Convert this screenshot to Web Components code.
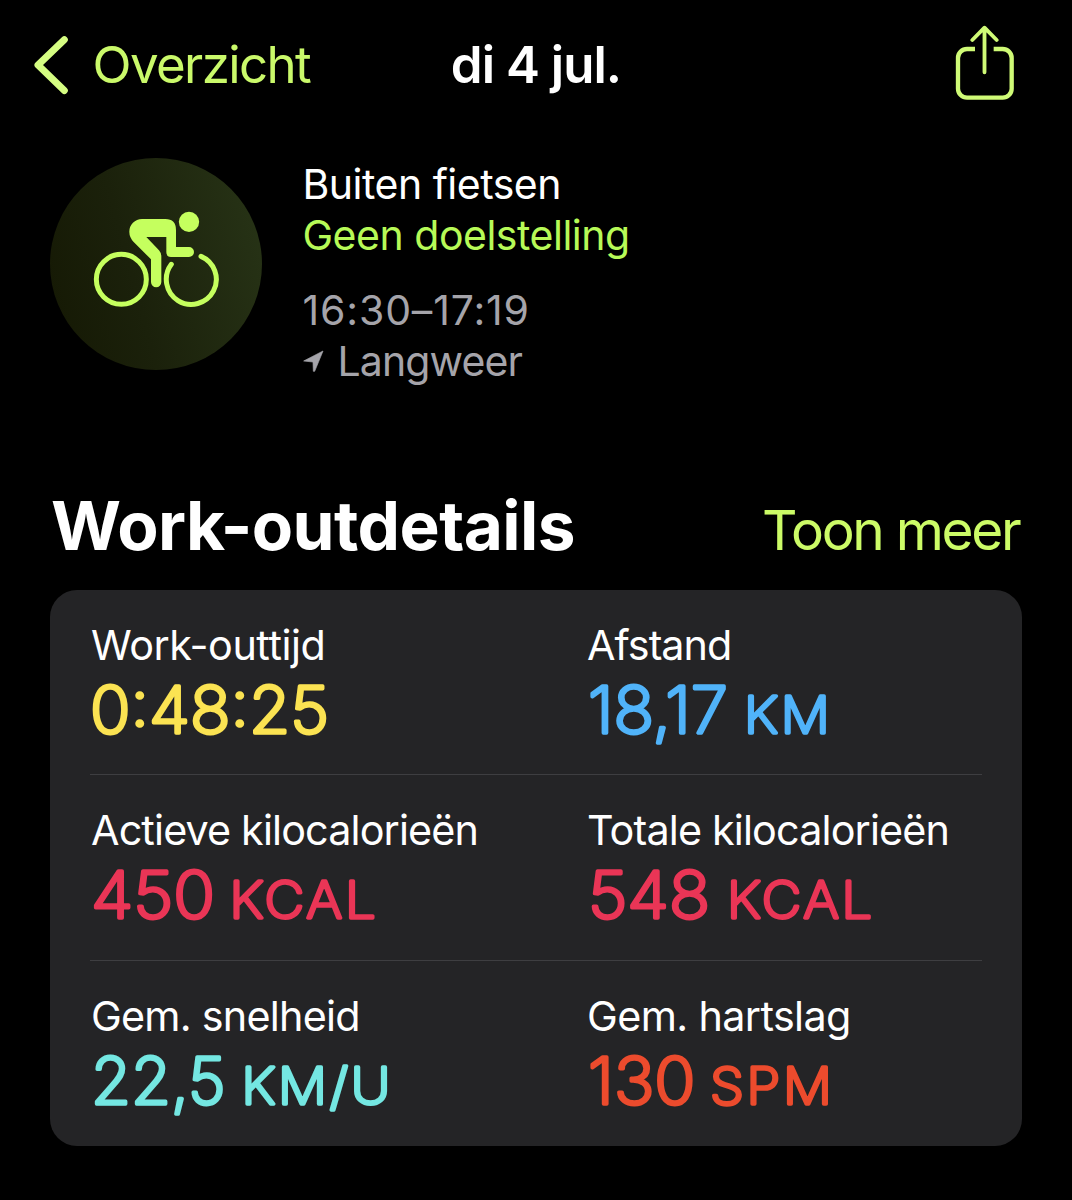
<!DOCTYPE html>
<html lang="nl">
<head>
<meta charset="utf-8">
<title>Work-out</title>
<style>
  html, body { margin: 0; background: #000; }
  body { width: 1072px; height: 1200px; overflow: hidden; font-family: Inter, "Liberation Sans", sans-serif; color: #fff; }
</style>
</head>
<body>
<workout-screen></workout-screen>
<script>
const define = (name, html) => {
  const template = document.createElement('template');
  template.innerHTML = html;
  customElements.define(name, class extends HTMLElement {
    constructor() {
      super();
      this.attachShadow({ mode: 'open' }).append(template.content.cloneNode(true));
    }
  });
};

/* Top bar: back link, date, share button */
define('nav-bar', `
<style>
  :host { display: grid; grid-template-columns: 1fr auto 1fr; align-items: center; height: 130px; padding: 0 33px; box-sizing: border-box; font-size: 51px; line-height: 60px; }
  .back { display: flex; align-items: center; gap: 23.500px; color: #caf96a; letter-spacing: -1.6px; }
  .title { font-weight: 600; letter-spacing: -.97px; white-space: nowrap; }
  .share { justify-self: end; margin-right: 23px; }
  svg { display: block; }
</style>
<div class="back">
  <svg width="36" height="60" viewBox="33 35 36 60" fill="none" stroke="#d5fd82" stroke-width="7" stroke-linecap="round" stroke-linejoin="round"><path d="M64.3 39.7 38 65l26.3 25.500"/></svg>
  <span><slot name="back"></slot></span>
</div>
<div class="title"><slot></slot></div>
<svg class="share" width="62" height="80" viewBox="72 45 186 240" fill="none" stroke="#cffa76" stroke-width="13" stroke-linejoin="round"><path d="M135 117h-24a27 27 0 0 0-27 27v92a27 27 0 0 0 27 27h107a27 27 0 0 0 27-27v-92a27 27 0 0 0-27-27h-27"/><path stroke-width="11.500" stroke-linecap="round" d="M163.500 187V54M127 90l36.500-37 36.500 37"/></svg>
`);

define('cycle-badge', `
<style>
  :host { display: block; width: 212px; height: 212px; border-radius: 50%; background: linear-gradient(75deg, #161a05 8%, #1b210b 40%, #273316 95%); }
  svg { display: block; }
</style>
<svg width="212" height="212" viewBox="30 24 636 636" fill="#c5ff5e">
  <g fill="none" stroke="#c5ff5e" stroke-width="15" stroke-linecap="round">
    <circle cx="244" cy="388" r="75"/>
    <path d="M483 319A75 75 0 1 1 394 343"/>
  </g>
  <circle cx="447" cy="215.500" r="30.500"/>
  <path d="M306 207H376Q408 207 408 240V291H447a15 15 0 0 1 0 30H393Q379 321 379 307V261H319L357 301Q364 309 364 319V396a15.500 15.500 0 0 1-31 0V328L281 276Q268 262 268 246A38 38 0 0 1 306 207Z"/>
</svg>
`);

define('workout-summary', `
<style>
  :host { display: flex; gap: 40.500px; padding: 28px 50px 0; font-size: 41px; line-height: 51px; white-space: nowrap; }
  .info { padding-top: 1px; }
  .name { letter-spacing: -.5px; }
  .goal { color: #b7fa57; letter-spacing: -.48px; }
  .time { color: #a5a4aa; letter-spacing: .85px; margin-top: 24px; }
  .place { color: #a5a4aa; letter-spacing: -.9px; display: flex; align-items: center; gap: 14px; }
</style>
<cycle-badge></cycle-badge>
<div class="info">
  <div class="name"><slot name="name"></slot></div>
  <div class="goal"><slot name="goal"></slot></div>
  <div class="time"><slot name="time"></slot></div>
  <div class="place"><svg width="21" height="23" viewBox="41 604 63 69" fill="#a5a4aa" stroke="#a5a4aa" stroke-width="2" stroke-linejoin="round"><path d="M43 637 101 607 76 668 72 668 71 640Z"/></svg><slot name="place"></slot></div>
</div>
`);

define('section-heading', `
<style>
  :host { display: flex; justify-content: space-between; align-items: baseline; height: 80px; padding: 0 52px 0 51px; white-space: nowrap; }
  h2 { margin: 0; font-size: 67.500px; line-height: 80px; font-weight: 700; letter-spacing: -.55px; }
  .action { font-size: 55px; line-height: 80px; color: #ccfb67; letter-spacing: -2.300px; margin-right: .5px; }
</style>
<h2><slot></slot></h2><span class="action"><slot name="action"></slot></span>
`);

/* One statistic. Figures are outlined with a round-joined stroke for soft terminals. */
customElements.define('stat-cell', class extends HTMLElement {
  connectedCallback() {
    const a = n => this.getAttribute(n);
    const unit = a('unit') ? `<text class="unit" x="${a('ux')}" y="63" textLength="${a('ul')}" lengthAdjust="spacingAndGlyphs">${a('unit')}</text>` : '';
    this.attachShadow({ mode: 'open' }).innerHTML = `
<style>
  :host { display: block; padding-top: 30px; }
  .label { font-size: 41.300px; line-height: 50px; height: 50px; padding-left: 1px; white-space: nowrap; letter-spacing: ${a('track')}px; }
  svg { display: block; overflow: visible; fill: ${a('tint')}; stroke: ${a('tint')}; stroke-linejoin: round; }
  .value { font-size: 64.500px; font-weight: 200; stroke-width: 3.500px; }
  .unit { font-size: 50.500px; font-weight: 200; stroke-width: 3.400px; letter-spacing: 2.500px; }
</style>
<div class="label"><slot></slot></div>
<svg width="396" height="80"><text class="value" x="${a('vx')}" y="63.300" textLength="${a('vl')}" lengthAdjust="spacingAndGlyphs">${a('value')}</text>${unit}</svg>`;
  }
});

define('stat-row', `
<style>
  :host { display: grid; grid-template-columns: 496px 396px; height: 185.300px; box-sizing: border-box; border-bottom: 1px solid #3e3e41; }
  :host(:last-of-type) { border-bottom-color: transparent; }
</style>
<slot></slot>
`);

define('stat-card', `
<style>
  :host { display: block; margin: 24px 50px 0; height: 556px; padding: 0 40px; box-sizing: border-box; background: #242426; border-radius: 27px; }
</style>
<slot></slot>
`);

define('workout-screen', `
<style>
  :host { display: block; height: 1200px; background: #000; }
  section-heading { margin-top: 116px; }
  workout-summary { height: 212px; }
</style>
<nav-bar><span slot="back">Overzicht</span>di 4 jul.</nav-bar>
<workout-summary>
  <span slot="name">Buiten fietsen</span><span slot="goal">Geen doelstelling</span>
  <span slot="time">16:30–17:19</span><span slot="place">Langweer</span>
</workout-summary>
<section-heading>Work-outdetails<span slot="action">Toon meer</span></section-heading>
<stat-card>
  <stat-row>
    <stat-cell track="-.45" tint="#fbe352" value="0:48:25" vx="0" vl="239">Work-outtijd</stat-cell>
    <stat-cell track="-1" tint="#50b3f9" value="18,17" vx="2" vl="140" unit="KM" ux="158" ul="88.500">Afstand</stat-cell>
  </stat-row>
  <stat-row>
    <stat-cell track="-.86" tint="#ea3556" value="450" vx="1" vl="124" unit="KCAL" ux="139.500" ul="149">Actieve kilocalorieën</stat-cell>
    <stat-cell track="-.84" tint="#ea3556" value="548" vx="2" vl="122" unit="KCAL" ux="141" ul="148">Totale kilocalorieën</stat-cell>
  </stat-row>
  <stat-row>
    <stat-cell track="-.76" tint="#74e7e2" value="22,5" vx="1" vl="134.500" unit="KM/U" ux="151.500" ul="151.500">Gem. snelheid</stat-cell>
    <stat-cell track="-.62" tint="#ec4b2d" value="130" vx="2" vl="107.500" unit="SPM" ux="124" ul="124.500">Gem. hartslag</stat-cell>
  </stat-row>
</stat-card>
`);
</script>
</body>
</html>
